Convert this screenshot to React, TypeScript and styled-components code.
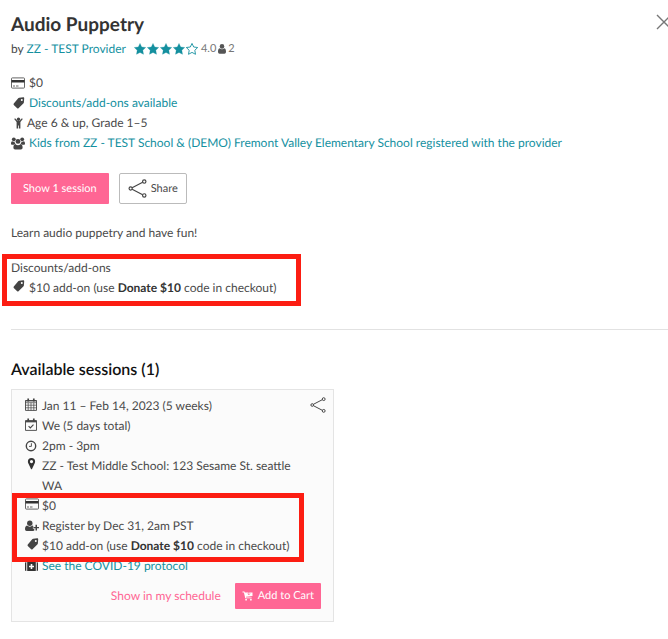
import React from "react";
import styled, { createGlobalStyle, css } from "styled-components";

const teal = "#14909f";
const pink = "#ff6694";
const ink = "#4a4a4a";
const red = "#fc1d12";

const GlobalStyle = createGlobalStyle`
  *, *::before, *::after { box-sizing: border-box; }
  body {
    margin: 0;
    background: #fff;
    color: ${ink};
    font-family: Lato, "Open Sans", sans-serif;
    font-size: 12px;
    line-height: 20px;
    text-rendering: geometricPrecision;
  }
  h1, h2, h3, p, ul { margin: 0; padding: 0; font-weight: inherit; font-size: inherit; }
  ul { list-style: none; }
  button { font: inherit; cursor: pointer; margin: 0; padding: 0; border: 0; background: none; color: inherit; text-rendering: inherit; }
`;

const Page = styled.main`
  padding: 13px 0 17px 11px;
  overflow: hidden;
`;

const Header = styled.header`
  display: flex;
  justify-content: space-between;
  align-items: flex-start;
`;

const Title = styled.h1`
  && { font-size: 19px; font-weight: 700; }
  line-height: 24px;
  color: #333;
`;

const CloseButton = styled.button`
  display: flex;
  margin-top: 1px;
  margin-right: -4px;
`;

const Byline = styled.div`
  display: flex;
  align-items: center;
  margin-top: 2px;
  white-space: pre;
`;

const Stars = styled.span`
  display: flex;
  gap: 1px;
  margin-left: 8px;
  color: ${teal};
`;

const Score = styled.span`
  display: flex;
  align-items: center;
  gap: 2px;
  margin-left: 3px;
  font-size: 11px;
  color: #777;
`;

const Link = styled.a`
  color: ${teal};
  text-decoration: none;
`;

const Facts = styled.ul`
  margin-top: 14px;
`;

const Row = styled.li<{ $tight?: boolean }>`
  display: grid;
  grid-template-columns: ${(p) => (p.$tight ? "16px" : "18px")} 1fr;
`;

const CardRow = styled.li`
  display: grid;
  grid-template-columns: 17px 1fr;
`;

const IconCell = styled.span<{ $raised?: boolean }>`
  display: flex;
  align-items: center;
  justify-content: flex-start;
  height: ${(p) => (p.$raised ? "16px" : "20px")};
`;

const Strong = styled.strong`
  font-weight: 700;
  color: #333;
`;

const Actions = styled.div`
  display: flex;
  gap: 10px;
  margin-top: 20px;
`;

const filled = css`
  background: ${pink};
  color: #fff;
  border-radius: 1px;
`;

const SessionButton = styled.button`
  ${filled}
  height: 31px;
  padding: 0 12px;
  font-size: 11px;
`;

const ShareButton = styled.button`
  display: flex;
  align-items: center;
  gap: 4px;
  height: 31px;
  padding: 0 8px;
  font-size: 11px;
  border: 1px solid #bbb;
  border-radius: 2px;
`;

const Description = styled.p`
  margin-top: 19px;
`;

const outline = css`
  position: relative;
  &::after {
    content: "";
    position: absolute;
    border: 5px solid ${red};
    pointer-events: none;
  }
`;

const Discounts = styled.section`
  ${outline}
  width: fit-content;
  margin-top: 15px;
  &::after { inset: -4px -24px -8px -9px; }
`;

const Divider = styled.hr`
  height: 1px;
  margin: 31px 0 0;
  border: 0;
  background: #e2e2e2;
`;

const SectionTitle = styled.h2`
  && { font-size: 16px; font-weight: 600; }
  margin-top: 30px;
  color: #111;
`;

const Card = styled.article`
  position: relative;
  width: 100%;
  max-width: 323px;
  margin-top: 9px;
  padding: 6px 12px 12px 13px;
  border: 1px solid #e4e4e4;
  background: #fbfbfb;
`;

const CardShare = styled.button`
  position: absolute;
  top: 7px;
  right: 7px;
  display: flex;
`;

const Place = styled.span`
  max-width: 260px;
`;

const PriceGroup = styled.ul`
  ${outline}
  width: fit-content;
  &::after { inset: -3px -14px -6px -13px; }
`;

const CardActions = styled.div`
  display: flex;
  align-items: center;
  justify-content: flex-end;
  gap: 14px;
  margin-top: 7px;
`;

const ScheduleButton = styled.button`
  color: ${pink};
`;

const CartButton = styled.button`
  ${filled}
  display: flex;
  align-items: center;
  gap: 5px;
  height: 26px;
  padding: 0 7px;
  font-size: 11px;
`;

const starPath = "M6 .4l1.7 3.6 4 .5-2.9 2.8.7 4L6 9.4l-3.5 1.9.7-4L.3 4.5l4-.5z";

const Star = ({ empty }: { empty?: boolean }) => (
  <svg width="12" height="12" viewBox="0 0 12 12" aria-hidden="true">
    <path d={starPath} fill={empty ? "none" : "currentColor"} stroke="currentColor" strokeWidth={empty ? 0.9 : 0.3} />
  </svg>
);

const PersonIcon = () => (
  <svg width="8" height="10" viewBox="0 0 8 10" fill="#555" aria-hidden="true">
    <circle cx="4" cy="2.4" r="2.3" />
    <path d="M1.5 4.2C.4 4.6 0 6 0 7.6 0 9 .7 9.8 1.6 9.8h4.8C7.3 9.8 8 9 8 7.6 8 6 7.600 4.600 6.500 4.200 5.200 5.700 2.800 5.700 1.500 4.200z" />
  </svg>
);

const CardIcon = () => (
  <svg width="14" height="12" viewBox="0 0 14 12" aria-hidden="true">
    <rect x=".5" y=".9" width="13" height="10.200" rx=".8" fill="none" stroke="#555" strokeWidth=".9" />
    <path d="M.5 3h13v2.500H.5z" fill="#333" />
    <path d="M2 9h2M5 9h2.500" stroke="#555" strokeWidth=".9" />
  </svg>
);

const TagIcon = () => (
  <svg width="14" height="12" viewBox="0 0 14 12" aria-hidden="true">
    <path
      d="M8.200.7l4-.4c.7 0 1 .3 1 1l-.3 3.900c0 .5-.2.9-.6 1.200l-4.800 4.900c-.4.4-.9.4-1.300 0L2.800 7.900c-.4-.4-.4-.9 0-1.300L7 1.400c.3-.4.700-.6 1.200-.7zm2.600 1.200a1 1 0 1 0 0 2 1 1 0 0 0 0-2z"
      fill="#444"
      fillRule="evenodd"
    />
  </svg>
);

const ChildIcon = () => (
  <svg width="14" height="12" viewBox="0 0 14 12" fill="#444" aria-hidden="true">
    <circle cx="7.500" cy="2.200" r="1.700" />
    <path d="M4.100 1.200l2.200 2.600h2.400l2.200-2.600.9.700-2.400 3v6.500H7.900V8.500h-.8v2.900H5.600V4.900l-2.400-3z" />
  </svg>
);

const GroupIcon = () => (
  <svg width="14" height="13" viewBox="0 0 14 13" fill="#444" aria-hidden="true">
    <circle cx="2.800" cy="2.300" r="1.900" />
    <circle cx="11.200" cy="2.300" r="1.900" />
    <circle cx="7" cy="4.400" r="2.400" />
    <path d="M1.200 4.300C.3 4.600 0 5.500 0 6.800c0 .6.500 1 1.200 1h1.700c.3-.6.900-.9 1.600-.9-.7-.7-1-1.400-1-2.400-.8.400-1.600.3-2.300-.2zM12.800 4.300c.9.300 1.200 1.200 1.200 2.500 0 .6-.5 1-1.200 1h-1.700c-.3-.6-.9-.9-1.600-.9.7-.7 1-1.400 1-2.400.8.400 1.600.3 2.300-.2z" />
    <path d="M4.300 7C2.900 7.400 2.400 8.800 2.400 10.600c0 1.300.7 2 1.700 2h5.800c1 0 1.700-.7 1.700-2C11.600 8.800 11.100 7.400 9.700 7 8 8.600 6 8.600 4.300 7z" />
  </svg>
);

const ShareIcon = ({ size }: { size: number }) => (
  <svg width={size} height={size} viewBox="0 0 18 18" fill="none" stroke="#444" strokeWidth="1.100" aria-hidden="true">
    <path d="M3.900 8.200l10-5.200M3.900 9.800l10 5.200" />
    <circle cx="2.500" cy="9" r="1.500" />
    <circle cx="15.400" cy="2.400" r="1.600" />
    <circle cx="15.400" cy="15.600" r="1.600" />
  </svg>
);

const CalendarIcon = () => (
  <svg width="12" height="13" viewBox="0 0 12 13" fill="none" stroke="#444" aria-hidden="true">
    <path d="M.5 2.500h11v9.900H.5z" strokeWidth=".9" />
    <path d="M.5 4.700h11M.5 7.200h11M.5 9.800h11M3.200 4.700v7.700M6 4.700v7.700M8.800 4.700v7.700" strokeWidth=".7" />
    <path d="M3.200.4v3M8.800.4v3" strokeWidth="1.700" />
    <path d="M.5 2.900h11" strokeWidth="1" />
  </svg>
);

const CalendarCheckIcon = () => (
  <svg width="12" height="13" viewBox="0 0 12 13" fill="none" stroke="#444" aria-hidden="true">
    <path d="M.5 2.500h11v9.900H.5z" strokeWidth=".9" />
    <path d="M.5 3.700h11" strokeWidth="1.300" />
    <path d="M3.200.4v3M8.800.4v3" strokeWidth="1.700" />
    <path d="M3.600 8.200l1.700 1.700 3.200-3.300" strokeWidth="1.100" />
  </svg>
);

const ClockIcon = () => (
  <svg width="12" height="12" viewBox="0 0 12 12" fill="none" stroke="#444" aria-hidden="true">
    <circle cx="6" cy="6" r="4.700" strokeWidth="1.400" />
    <path d="M6.400 3.200v3.200H4" strokeWidth=".9" />
  </svg>
);

const PinIcon = () => (
  <svg width="13" height="12" viewBox="0 0 13 12" aria-hidden="true">
    <path
      d="M6.500 0a3.600 3.600 0 0 1 3.600 3.600c0 1.400-.6 2.100-1.200 3.300L7 10.900c-.2.500-.8.500-1 0l-1.900-4C3.500 5.700 2.900 5 2.900 3.600A3.600 3.600 0 0 1 6.500 0zm0 2a1.600 1.600 0 1 0 0 3.200 1.600 1.600 0 0 0 0-3.200z"
      fill="#333"
      fillRule="evenodd"
    />
  </svg>
);

const UserPlusIcon = () => (
  <svg width="14" height="12" viewBox="0 0 14 12" fill="#444" aria-hidden="true">
    <circle cx="4.800" cy="3.200" r="2.700" />
    <path d="M2 5.600C.6 6 0 7.300 0 9.100 0 10.400.7 11 1.700 11h6.400c.5 0 .9-.2 1.200-.5V8.700H7.900V6.600h.8c-.2-.5-.6-.8-1.100-1C5.900 7 3.700 7 2 5.600z" />
    <path d="M10.500 4.800H12v2.100h2v1.400h-2v2.200h-1.500V8.300H8.400V6.900h2.100z" />
  </svg>
);

const MedkitIcon = () => (
  <svg width="13" height="12" viewBox="0 0 13 12" fill="#333" aria-hidden="true">
    <path d="M0 3.500C0 2.600.5 2 1.300 2v9C.5 11 0 10.500 0 9.700zM11.700 2c.8 0 1.300.6 1.300 1.500v6.200c0 .8-.5 1.300-1.300 1.300z" />
    <path
      d="M2.200 2h1.600V.9c0-.5.3-.8.8-.8h3.800c.5 0 .8.300.8.800V2h1.600v9H2.200zM5 1.300V2h3v-.7zM5.700 4v1.700H4v1.600h1.700V9h1.600V7.300H9V5.700H7.300V4z"
      fillRule="evenodd"
    />
  </svg>
);

const CartIcon = () => (
  <svg width="11" height="10" viewBox="0 0 10 10" fill="currentColor" aria-hidden="true">
    <path d="M0 .6h1.700c.4 0 .5.4.6.8H10v3.700l-6.500.6v.7h5.700v.8H3.100c-.5 0-.7-.3-.5-.8L1.400 1.500H0z" />
    <circle cx="3.600" cy="8.700" r=".9" />
    <circle cx="8.400" cy="8.700" r=".9" />
    <path d="M6.300.4v3.200M5 2.600l1.300 1.300 1.300-1.300" fill="none" stroke="#ff6694" strokeWidth=".7" />
  </svg>
);

const CloseIcon = () => (
  <svg width="16" height="16" viewBox="0 0 16 16" stroke="#777" strokeWidth="1.400" fill="none" aria-hidden="true">
    <path d="M1 1l14 14M15 1L1 15" />
  </svg>
);

const AddOn = () => (
  <span>
    $10 add-on (use <Strong>Donate $10</Strong> code in checkout)
  </span>
);

export default function App() {
  return (
    <>
      <GlobalStyle />
      <Page>
        <Header>
          <Title>Audio Puppetry</Title>
          <CloseButton type="button" aria-label="Close">
            <CloseIcon />
          </CloseButton>
        </Header>
        <Byline>
          <span>by </span>
          <Link href="#provider">ZZ - TEST Provider</Link>
          <Stars role="img" aria-label="4 out of 5 stars">
            <Star />
            <Star />
            <Star />
            <Star />
            <Star empty />
          </Stars>
          <Score>
            <span>4.0</span>
            <PersonIcon />
            <span>2</span>
          </Score>
        </Byline>

        <Facts>
          <Row>
            <IconCell><CardIcon /></IconCell>
            <span>$0</span>
          </Row>
          <Row>
            <IconCell><TagIcon /></IconCell>
            <Link href="#discounts">Discounts/add-ons available</Link>
          </Row>
          <Row $tight>
            <IconCell><ChildIcon /></IconCell>
            <span>Age 6 &amp; up, Grade 1–5</span>
          </Row>
          <Row>
            <IconCell><GroupIcon /></IconCell>
            <Link href="#kids">
              Kids from ZZ - TEST School &amp; (DEMO) Fremont Valley Elementary School registered with the provider
            </Link>
          </Row>
        </Facts>

        <Actions>
          <SessionButton type="button">Show 1 session</SessionButton>
          <ShareButton type="button">
            <ShareIcon size={19} />
            Share
          </ShareButton>
        </Actions>

        <Description>Learn audio puppetry and have fun!</Description>

        <Discounts id="discounts">
          <h3>Discounts/add-ons</h3>
          <ul>
            <Row>
              <IconCell $raised><TagIcon /></IconCell>
              <AddOn />
            </Row>
          </ul>
        </Discounts>

        <Divider />

        <SectionTitle>Available sessions (1)</SectionTitle>
        <Card>
          <CardShare type="button" aria-label="Share session">
            <ShareIcon size={16} />
          </CardShare>
          <ul>
            <CardRow>
              <IconCell $raised><CalendarIcon /></IconCell>
              <span>Jan 11 – Feb 14, 2023 (5 weeks)</span>
            </CardRow>
            <CardRow>
              <IconCell $raised><CalendarCheckIcon /></IconCell>
              <span>We (5 days total)</span>
            </CardRow>
            <CardRow>
              <IconCell><ClockIcon /></IconCell>
              <span>2pm - 3pm</span>
            </CardRow>
            <CardRow>
              <IconCell $raised><PinIcon /></IconCell>
              <Place>ZZ - Test Middle School: 123 Sesame St. seattle WA</Place>
            </CardRow>
          </ul>
          <PriceGroup>
            <CardRow>
              <IconCell $raised><CardIcon /></IconCell>
              <span>$0</span>
            </CardRow>
            <CardRow>
              <IconCell><UserPlusIcon /></IconCell>
              <span>Register by Dec 31, 2am PST</span>
            </CardRow>
            <CardRow>
              <IconCell $raised><TagIcon /></IconCell>
              <AddOn />
            </CardRow>
          </PriceGroup>
          <ul>
            <CardRow>
              <IconCell><MedkitIcon /></IconCell>
              <Link href="#covid">See the COVID-19 protocol</Link>
            </CardRow>
          </ul>
          <CardActions>
            <ScheduleButton type="button">Show in my schedule</ScheduleButton>
            <CartButton type="button">
              <CartIcon />
              Add to Cart
            </CartButton>
          </CardActions>
        </Card>
      </Page>
    </>
  );
}
